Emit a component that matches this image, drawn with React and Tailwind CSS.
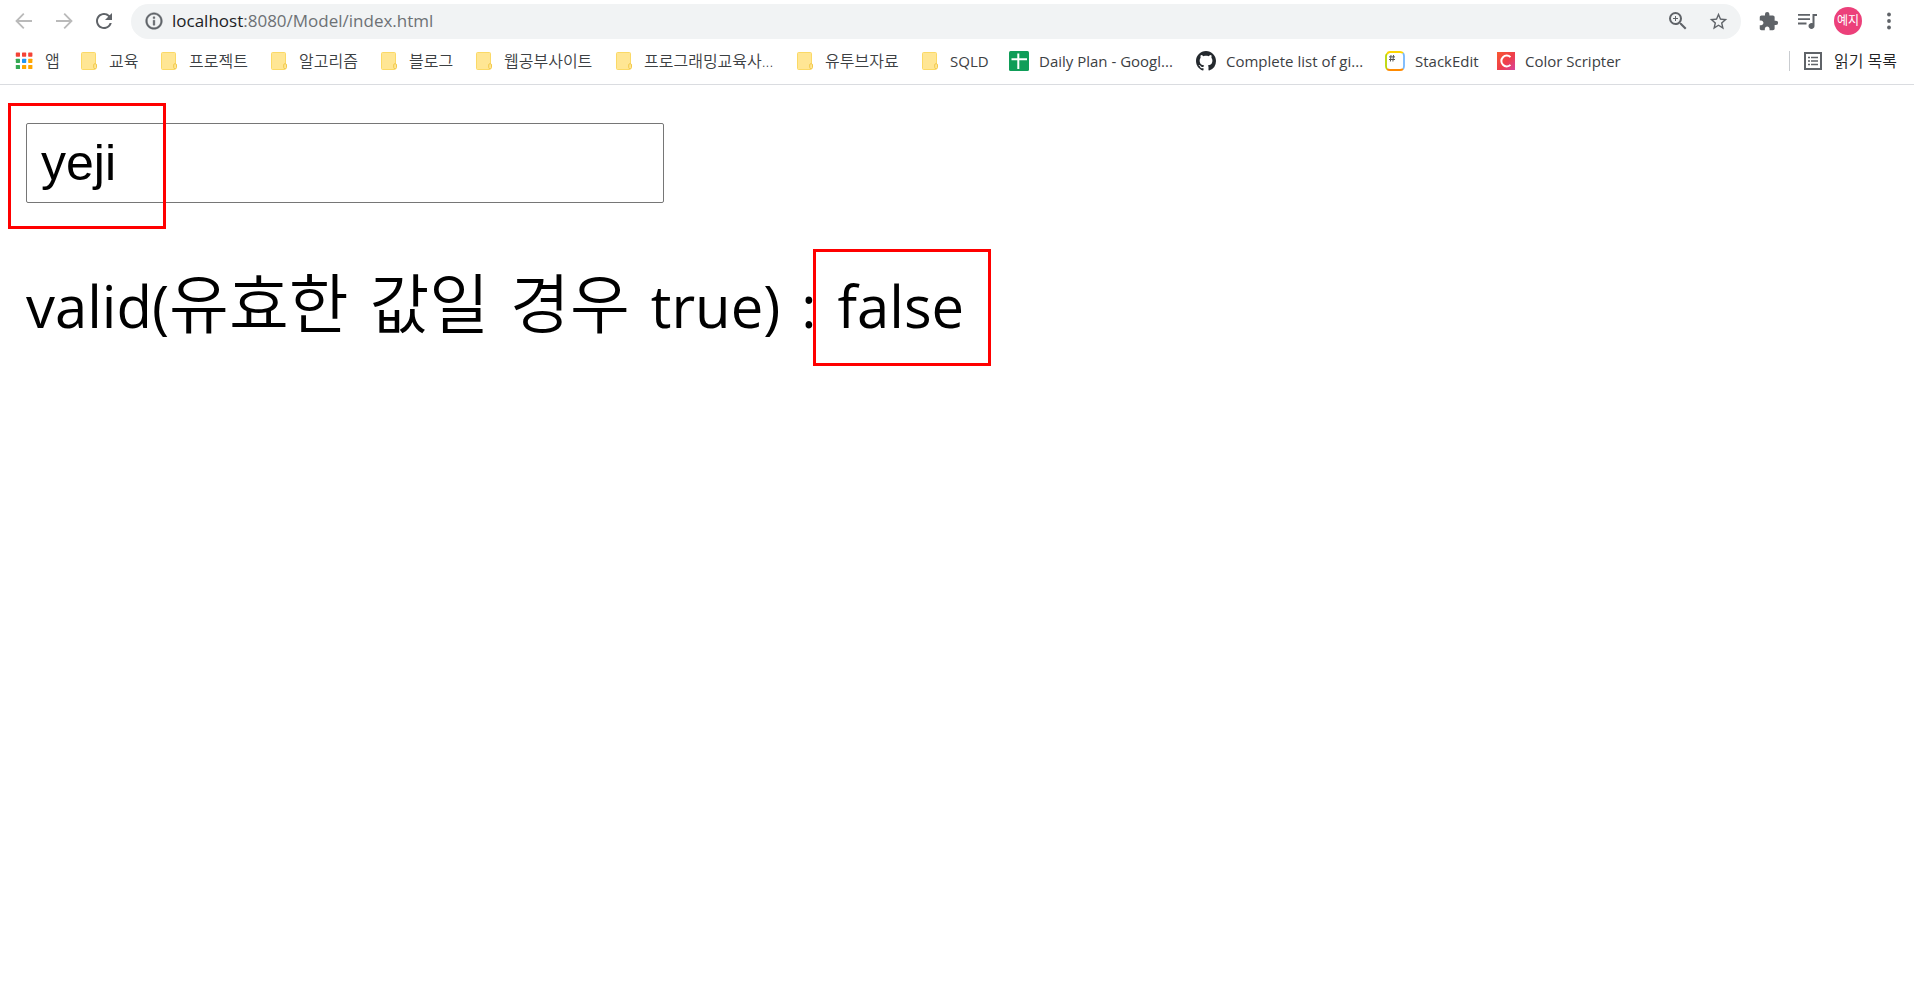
const folderItems = [
  ['교육', 'w-[80px]'],
  ['프로젝트', 'w-[110px]'],
  ['알고리즘', 'w-[110px]'],
  ['블로그', 'w-[95px]'],
  ['웹공부사이트', 'w-[140px]'],
  ['프로그래밍교육사...', 'w-[181px]'],
  ['유투브자료', 'w-[125px]'],
];

const folderLink = 'flex shrink-0 items-center gap-3 whitespace-nowrap';
const siteLink = 'flex shrink-0 items-center gap-[10px] whitespace-nowrap';
const iconBtn = 'flex size-6 shrink-0 items-center justify-center text-[#5f6368]';

function FolderIcon() {
  return (
    <svg viewBox="0 0 16 18" className="h-[18px] w-4 shrink-0">
      <rect x="0.5" y="0.5" width="14" height="17" rx="1" fill="#ffe694" stroke="#fbd966" />
      <rect x="12.7" y="11.7" width="2.8" height="5" rx="1.2" fill="#ffe694" stroke="#f2c94c" />
    </svg>
  );
}

function AppsIcon() {
  const colors = ['#f44336', '#f44336', '#f44336', '#34a853', '#2196f3', '#ffa600', '#34a853', '#ffa600', '#ffa600'];
  return (
    <svg viewBox="0 0 18 18" className="size-[18px] shrink-0">
      {colors.map((c, i) => (
        <rect key={i} x={(i % 3) * 6.2 + 0.8} y={Math.floor(i / 3) * 6.2 + 0.5} width="4.2" height="4.2" rx="0.6" fill={c} />
      ))}
    </svg>
  );
}

function SheetIcon() {
  return (
    <svg viewBox="0 0 20 20" className="size-5 shrink-0">
      <rect width="20" height="20" rx="1.5" fill="#0f9d58" />
      <path d="M9.300 2.500v15.500M2.500 8.200h15.500" stroke="#fff" strokeWidth="2" fill="none" />
    </svg>
  );
}

function GithubIcon() {
  return (
    <svg viewBox="0 0 16 16" className="size-5 shrink-0" fill="#24292e">
      <path d="M8 0C3.58 0 0 3.58 0 8c0 3.54 2.29 6.53 5.47 7.59.4.07.55-.17.55-.38 0-.19-.01-.82-.01-1.49-2.01.37-2.53-.49-2.69-.94-.09-.23-.48-.94-.82-1.13-.28-.15-.68-.52-.01-.53.63-.01 1.08.58 1.23.82.72 1.21 1.87.87 2.33.66.07-.52.28-.87.51-1.07-1.78-.2-3.64-.89-3.64-3.95 0-.87.31-1.59.82-2.15-.08-.2-.36-1.02.08-2.12 0 0 .67-.21 2.2.82.64-.18 1.32-.27 2-.27s1.36.09 2 .27c1.53-1.04 2.2-.82 2.2-.82.44 1.1.16 1.92.08 2.12.51.56.82 1.27.82 2.15 0 3.07-1.87 3.75-3.65 3.95.29.25.54.73.54 1.48 0 1.07-.01 1.93-.01 2.2 0 .21.15.46.55.38A8.01 8.01 0 0 0 16 8c0-4.42-3.58-8-8-8z" />
    </svg>
  );
}

function StackEditIcon() {
  return (
    <svg viewBox="0 0 20 20" className="size-5 shrink-0" fill="none" strokeWidth="1.8">
      <rect x="1" y="1" width="18" height="18" rx="4" fill="#fff" />
      <path d="M2 3Q3 1 5 1H15Q17 1 18 2.2" stroke="#ffd600" />
      <path d="M18 2.2Q19 3.4 19 5V15Q19 17 18 18" stroke="#75b7fd" />
      <path d="M18 18Q17 19 15 19H5Q3 19 2 18" stroke="#ff8a00" />
      <path d="M2 18Q1 17 1 15V5Q1 4 2 3" stroke="#bbd500" />
      <path d="M6 4l-.6 6.500M8.500 4l-.6 6.500M4 5.900h6M4 8.500h6" stroke="#555" strokeWidth="1" />
    </svg>
  );
}

function ColorScripterIcon() {
  return (
    <svg viewBox="0 0 18 18" className="size-[18px] shrink-0">
      <defs>
        <linearGradient id="cs" x1="0" y1="0" x2="1" y2="1">
          <stop offset="0" stopColor="#f9582f" />
          <stop offset="0.55" stopColor="#ee3e4c" />
          <stop offset="1" stopColor="#d844a0" />
        </linearGradient>
      </defs>
      <rect width="18" height="18" fill="url(#cs)" />
      <path d="M13.500 5.100A5.400 5.400 0 1 0 13.500 12.900" fill="none" stroke="#fff" strokeWidth="2" />
    </svg>
  );
}

function Toolbar() {
  return (
    <div className="flex h-[42px] items-center pr-[13px] pl-3">
      <div className="flex gap-4">
        <button aria-label="뒤로" className="flex size-6 items-center justify-center text-[#bababa]">
          <svg viewBox="0 0 24 24" className="size-6" fill="none" stroke="currentColor" strokeWidth="1.8"><path d="M20 12H5M11.800 4.700L4.500 12l7.300 7.300" /></svg>
        </button>
        <button aria-label="앞으로" className="flex size-6 items-center justify-center text-[#bababa]">
          <svg viewBox="0 0 24 24" className="size-6" fill="none" stroke="currentColor" strokeWidth="1.8"><path d="M4 12h15M12.200 4.700l7.300 7.300-7.300 7.300" /></svg>
        </button>
        <button aria-label="새로고침" className={iconBtn}>
          <svg viewBox="0 0 24 24" className="size-6" fill="currentColor"><path d="M17.65 6.35A7.958 7.958 0 0 0 12 4c-4.42 0-7.99 3.58-7.99 8s3.57 8 7.99 8c3.73 0 6.84-2.55 7.73-6h-2.08A5.99 5.99 0 0 1 12 18c-3.31 0-6-2.69-6-6s2.69-6 6-6c1.66 0 3.14.69 4.22 1.78L13 11h7V4l-2.35 2.35z" /></svg>
        </button>
      </div>
      <div className="ml-[15px] flex h-[35px] flex-1 items-center rounded-full bg-[#f1f3f4] pr-[11px] pl-[13px]">
        <svg viewBox="0 0 24 24" className="size-5 shrink-0" fill="#5f6368" stroke="#5f6368" strokeWidth="0.5"><path d="M11 7h2v2h-2zm0 4h2v6h-2zm1-9C6.480 2 2 6.480 2 12s4.480 10 10 10 10-4.480 10-10S17.520 2 12 2zm0 18c-4.410 0-8-3.590-8-8s3.590-8 8-8 8 3.590 8 8-3.590 8-8 8z" /></svg>
        <div className="ml-2 flex-1 text-[17px] text-[#6d7175]"><span className="text-[#202124]">localhost</span>:8080/Model/index.html</div>
        <div className="flex gap-4">
          <button aria-label="확대" className={iconBtn}>
            <svg viewBox="0 0 24 24" className="size-6" fill="currentColor"><path d="M15.500 14h-.79l-.28-.27A6.471 6.471 0 0 0 16 9.500 6.500 6.500 0 1 0 9.500 16c1.610 0 3.090-.59 4.230-1.570l.27.28v.79l5 4.990L20.490 19l-4.990-5zm-6 0C7.010 14 5 11.990 5 9.500S7.010 5 9.500 5 14 7.010 14 9.500 11.990 14 9.500 14zm.5-7H9v2H7v1h2v2h1v-2h2V9h-2z" /></svg>
          </button>
          <button aria-label="북마크" className={iconBtn}>
            <svg viewBox="0 0 24 24" className="size-[21px]" fill="currentColor"><path d="M22 9.240l-7.190-.62L12 2 9.190 8.630 2 9.240l5.460 4.730L5.820 21 12 17.270 18.180 21l-1.630-7.030L22 9.240zM12 15.400l-3.760 2.270 1-4.280-3.320-2.880 4.380-.38L12 6.100l1.710 4.040 4.380.38-3.320 2.880 1 4.280L12 15.400z" /></svg>
          </button>
        </div>
      </div>
      <div className="ml-[15px] flex items-center gap-[15px]">
        <button aria-label="확장 프로그램" className={iconBtn}>
          <svg viewBox="0 0 24 24" className="size-[21px]" fill="currentColor"><path d="M20.500 11H19V7c0-1.100-.9-2-2-2h-4V3.500a2.500 2.500 0 0 0-5 0V5H4c-1.100 0-1.990.9-1.990 2v3.800H3.500c1.490 0 2.700 1.210 2.700 2.700s-1.210 2.700-2.700 2.700H2V20c0 1.100.9 2 2 2h3.800v-1.500c0-1.490 1.210-2.700 2.700-2.700s2.700 1.210 2.700 2.700V22H17c1.100 0 2-.9 2-2v-4h1.500a2.500 2.500 0 0 0 0-5z" /></svg>
        </button>
        <button aria-label="미디어" className={iconBtn}>
          <svg viewBox="0 0 24 24" className="size-6" fill="currentColor"><path d="M22 5h-4.500v9.180c-.31-.11-.65-.18-1-.18-1.660 0-3 1.340-3 3s1.340 3 3 3 3-1.340 3-3V7H22V5zm-7 0H3v1.800h12V5zm0 4.300H3v1.800h12V9.300zm-3.500 4.300H3v1.800h8.500v-1.800z" /></svg>
        </button>
        <button aria-label="프로필" className="flex size-7 items-center justify-center rounded-full bg-[#ec407a] text-[12px] text-white">예지</button>
        <button aria-label="메뉴" className={iconBtn}>
          <svg viewBox="0 0 24 24" className="size-6" fill="currentColor"><circle cx="12" cy="5.500" r="1.900" /><circle cx="12" cy="12" r="1.900" /><circle cx="12" cy="18.500" r="1.900" /></svg>
        </button>
      </div>
    </div>
  );
}

function Bookmarks() {
  return (
    <nav className="flex h-[43px] items-center border-b border-[#dadce0] pr-[17px] pb-1 pl-[15px] text-[15px] text-[#3c4043]">
      <a href="#apps" className={folderLink + ' w-[66px]'}><AppsIcon /><span className="text-[16px] font-[350]">앱</span></a>
      {folderItems.map(([name, width]) => (
        <a key={name} href="#folder" className={folderLink + ' ' + width}><FolderIcon /><span className="text-[16px] font-[350]">{name}</span></a>
      ))}
      <a href="#sqld" className={folderLink + ' w-[87px]'}><FolderIcon />SQLD</a>
      <a href="#plan" className={siteLink + ' w-[187px]'}><SheetIcon />Daily Plan - Googl...</a>
      <a href="#list" className={siteLink + ' w-[189px]'}><GithubIcon />Complete list of gi...</a>
      <a href="#stackedit" className={siteLink + ' w-[112px]'}><StackEditIcon />StackEdit</a>
      <a href="#color" className={siteLink}><ColorScripterIcon />Color Scripter</a>
      <button className="ml-auto flex h-5 items-center gap-3 border-l border-[#c9ccd0] pl-[14px] whitespace-nowrap text-[#202124]">
        <svg viewBox="0 0 18 18" className="size-[18px]" fill="none" stroke="#5f6368">
          <rect x="1" y="1" width="16" height="16" strokeWidth="2" />
          <path d="M4 5.500h2M7 5.500h7M4 9h2M7 9h7M4 12.500h2M7 12.500h7" strokeWidth="1.500" />
        </svg>
        <span className="text-[16px] font-[350]">읽기 목록</span>
      </button>
    </nav>
  );
}

export default function App() {
  return (
    <div className="min-h-screen bg-white font-['Open_Sans','Noto_Sans_CJK_KR',sans-serif]">
      <header><Toolbar /><Bookmarks /></header>
      <main className="px-[26px] pt-[38px] text-black">
        <div className="relative w-[638px] max-w-full">
          <input aria-label="이름" defaultValue="yeji" className="block h-20 w-full rounded-[2px] border border-[#767676] px-[14px] font-['Liberation_Sans',sans-serif] text-[50px]" />
          <div className="pointer-events-none absolute -top-5 -left-[18px] h-[126px] w-[158px] border-[3px] border-[#ff0000]" />
        </div>
        <p className="mt-[60px] flex flex-wrap items-baseline gap-x-[21px] text-[58px] leading-[80px]">
          <span>valid(<span className="text-[65px] font-[350]">유효한</span></span>{' '}
          <span className="text-[65px] font-[350]">값일</span>{' '}
          <span className="text-[65px] font-[350]">경우</span>{' '}
          <span>true)</span>{' '}
          <span>:</span>{' '}
          <span className="relative">
            false
            <span className="pointer-events-none absolute -top-[17px] -left-[25px] h-[117px] w-[178px] border-[3px] border-[#ff0000]" />
          </span>
        </p>
      </main>
    </div>
  );
}
